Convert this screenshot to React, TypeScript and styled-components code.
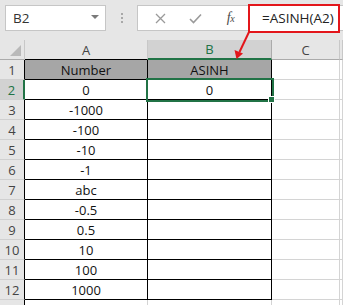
import React from 'react';
import styled, { createGlobalStyle, css } from 'styled-components';

const GREEN = '#217346';
const RED = '#e3161b';

const GlobalStyle = createGlobalStyle`
  html, body {
    margin: 0;
    padding: 0;
    background: #ffffff;
  }
  body {
    font-family: "Open Sans", "Noto Sans", sans-serif;
  }
`;

const Page = styled.div`
  position: relative;
  width: 343px;
  height: 305px;
  overflow: hidden;
  background: #ffffff;
`;

const Toolbar = styled.div`
  display: flex;
  align-items: flex-start;
  height: 40px;
  padding: 5px 0 0 5px;
  box-sizing: border-box;
  background: #e6e6e6;
`;

const NameBox = styled.div`
  display: flex;
  align-items: center;
  justify-content: space-between;
  width: 101px;
  height: 26px;
  box-sizing: border-box;
  padding: 0 6px 0 7px;
  background: #ffffff;
  border: 1px solid #c6c6c6;
  font-size: 13.5px;
  color: #333;
`;

const DropArrow = styled.span`
  width: 0;
  height: 0;
  border-left: 4px solid transparent;
  border-right: 4px solid transparent;
  border-top: 4px solid #7a7a7a;
  margin-bottom: 2px;
`;

const Grip = styled.div`
  display: flex;
  flex-direction: column;
  align-items: center;
  justify-content: center;
  gap: 2px;
  width: 31px;
  height: 26px;
`;

const GripDot = styled.span`
  width: 2px;
  height: 2px;
  background: #a8a8a8;
`;

const FormulaBox = styled.div`
  display: flex;
  align-items: center;
  flex: 1;
  height: 26px;
  box-sizing: border-box;
  background: #ffffff;
  border: 1px solid #c6c6c6;
  border-right: none;
`;

const Buttons = styled.div`
  display: flex;
  align-items: center;
  width: 110px;
  height: 100%;
  padding-left: 13px;
  box-sizing: border-box;
  gap: 17px;
`;

const IconSlot = styled.span`
  display: flex;
  align-items: center;
  justify-content: center;
  width: 18px;
  height: 18px;
`;

const Fx = styled.span`
  font-family: "Liberation Serif", serif;
  font-style: italic;
  font-size: 14px;
  color: #4a4a4a;
  letter-spacing: -0.5px;
  margin-left: 1px;

  sub {
    font-size: 10px;
    vertical-align: baseline;
  }
`;

const FormulaText = styled.div`
  display: flex;
  align-items: center;
  width: 92px;
  height: 29px;
  margin: -2px 0;
  box-sizing: border-box;
  border: 2px solid ${RED};
  padding-left: 12px;
  font-size: 13.5px;
  color: #222;
  background: #ffffff;
`;

const Sheet = styled.div`
  display: grid;
  grid-template-columns: 25px 123px 124px 68px 1fr;
  grid-auto-rows: 20px;
  font-size: 13px;
`;

const ColHead = styled.div<{ $selected?: boolean; $dark?: boolean }>`
  display: flex;
  align-items: center;
  justify-content: center;
  box-sizing: border-box;
  background: #e6e6e6;
  color: #444;
  border-right: 1px solid #c8c8c8;
  border-bottom: 1px solid ${(p) => (p.$dark ? '#000' : '#ababab')};
  ${(p) =>
    p.$selected &&
    css`
      background: #d2d2d2;
      color: ${GREEN};
      border-bottom: 2px solid ${GREEN};
      border-right-color: #ababab;
    `}
`;

const Corner = styled.div`
  position: relative;
  box-sizing: border-box;
  background: #e6e6e6;
  border-right: 1px solid #c8c8c8;
  border-bottom: 1px solid #ababab;

  &::after {
    content: '';
    position: absolute;
    right: 3px;
    bottom: 3px;
    width: 0;
    height: 0;
    border-left: 11px solid transparent;
    border-bottom: 11px solid #b9b9b9;
  }
`;

const RowHead = styled.div<{ $selected?: boolean }>`
  display: flex;
  align-items: center;
  justify-content: center;
  box-sizing: border-box;
  background: #e6e6e6;
  color: #444;
  border-right: 1px solid #000;
  border-bottom: 1px solid #d0d0d0;
  ${(p) =>
    p.$selected &&
    css`
      background: #d2d2d2;
      color: ${GREEN};
      border-right: 2px solid ${GREEN};
    `}
`;

const Cell = styled.div<{ $ruled?: boolean; $header?: boolean; $active?: boolean }>`
  position: relative;
  display: flex;
  align-items: center;
  justify-content: center;
  box-sizing: border-box;
  color: #111;
  border-right: 1px solid ${(p) => (p.$ruled ? '#000' : '#d4d4d4')};
  border-bottom: 1px solid ${(p) => (p.$ruled ? '#000' : '#d4d4d4')};
  background: ${(p) => (p.$header ? '#a6a6a6' : '#ffffff')};
  ${(p) =>
    p.$active &&
    css`
      z-index: 2;
      outline: 2px solid ${GREEN};
      outline-offset: 0px;

      &::after {
        content: '';
        position: absolute;
        right: -4px;
        bottom: -4px;
        width: 5px;
        height: 5px;
        background: ${GREEN};
        border: 1px solid #ffffff;
      }
    `}
`;

const Arrow = styled.svg`
  position: absolute;
  left: 0;
  top: 0;
  pointer-events: none;
  z-index: 5;
`;

const rows: [string, string][] = [
  ['Number', 'ASINH'],
  ['0', '0'],
  ['-1000', ''],
  ['-100', ''],
  ['-10', ''],
  ['-1', ''],
  ['abc', ''],
  ['-0.5', ''],
  ['0.5', ''],
  ['10', ''],
  ['100', ''],
  ['1000', ''],
];

const App: React.FC = () => {
  return (
    <Page>
      <GlobalStyle />
      <Toolbar>
        <NameBox>
          B2
          <DropArrow />
        </NameBox>
        <Grip>
          <GripDot />
          <GripDot />
          <GripDot />
        </Grip>
        <FormulaBox>
          <Buttons>
            <IconSlot>
              <svg width="11" height="11" viewBox="0 0 11 11">
                <path d="M1 1 L10 10 M10 1 L1 10" stroke="#9a9a9a" strokeWidth="1.3" fill="none" />
              </svg>
            </IconSlot>
            <IconSlot>
              <svg width="13" height="11" viewBox="0 0 13 11">
                <path d="M1 6 L4.5 9.5 L12 1.5" stroke="#9a9a9a" strokeWidth="1.6" fill="none" />
              </svg>
            </IconSlot>
            <IconSlot>
              <Fx>
                f<sub>x</sub>
              </Fx>
            </IconSlot>
          </Buttons>
          <FormulaText>=ASINH(A2)</FormulaText>
        </FormulaBox>
      </Toolbar>

      <Sheet>
        <Corner />
        <ColHead $dark>A</ColHead>
        <ColHead $selected>B</ColHead>
        <ColHead>C</ColHead>
        <ColHead />

        {rows.map(([a, b], i) => (
          <React.Fragment key={i}>
            <RowHead $selected={i === 1}>{i + 1}</RowHead>
            <Cell $ruled $header={i === 0}>{a}</Cell>
            <Cell $ruled $header={i === 0} $active={i === 1}>
              {b}
            </Cell>
            <Cell />
            <Cell />
          </React.Fragment>
        ))}
        <RowHead />
        <Cell />
        <Cell />
        <Cell />
        <Cell />
      </Sheet>

      <Arrow width="343" height="305">
        <line x1="249" y1="32" x2="239.5" y2="52" stroke={RED} strokeWidth="2" />
        <polygon points="236.5,59 234.5,50 243,53.5" fill={RED} />
      </Arrow>
    </Page>
  );
};

export default App;
